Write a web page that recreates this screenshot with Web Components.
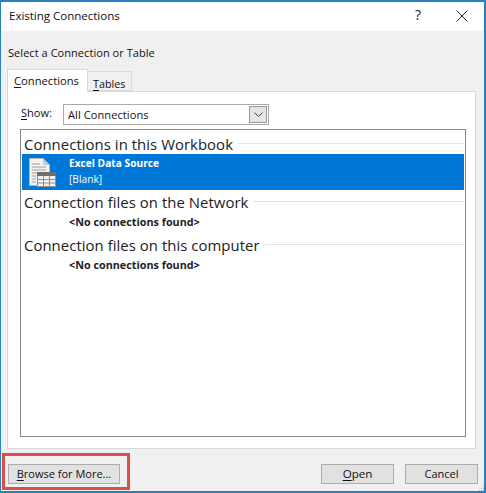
<!DOCTYPE html>
<html>
<head>
<meta charset="utf-8">
<title>Existing Connections</title>
<style>
  html, body { margin: 0; height: 100%; background: #fff; }
  body { font: 12px "Open Sans", "Noto Sans", sans-serif; color: #111; overflow: hidden; }
</style>
</head>
<body>

<x-dialog heading="Existing Connections">
  <div slot="lead">Select a Connection or Table</div>
  <x-tabs>
    <x-show-filter value="All Connections"></x-show-filter>
    <x-conn-list>
      <x-conn-group heading="Connections in this Workbook">
        <x-conn-item name="Excel Data Source" detail="[Blank]"></x-conn-item>
      </x-conn-group>
      <x-conn-group heading="Connection files on the Network" empty></x-conn-group>
      <x-conn-group heading="Connection files on this computer" empty></x-conn-group>
    </x-conn-list>
  </x-tabs>
  <x-button slot="left" key="B" rest="rowse for More..." wide></x-button>
  <x-button slot="right" key="O" rest="pen"></x-button>
  <x-button slot="right" rest="Cancel"></x-button>
  <x-highlight slot="overlay"></x-highlight>
</x-dialog>

<script>
// window frame, title bar and the button row
var template_dialog = document.createElement("template");
template_dialog.innerHTML = `
<style>
  :host { display: flex; flex-direction: column; box-sizing: border-box; width: 486px; height: 493px; position: relative;
    background: #f0f0f0; border-style: solid; border-color: #2a7fc0; border-width: 2px 2px 2px 1px; }
  #bar { display: flex; align-items: center; height: 29px; background: #fff; flex: none; }
  #title { font-size: 11.6px; margin: -2px 0 0 8px; flex: 1; letter-spacing: -0.05px; }
  #help { font-size: 14px; width: 14px; text-align: center; margin-right: 30px; margin-top: -4px; color: #222; }
  #close { width: 14px; height: 14px; margin-right: 15px; margin-top: -2px; display: block; }
  #lead { padding: 14px 0 0 7px; height: 25px; flex: none; font-size: 11px; letter-spacing: 0.05px; line-height: 16px; }
  #buttons { display: flex; justify-content: space-between; padding: 15px 6px 0 7px; flex: none; }
  #right { display: flex; gap: 11px; }
  #grip { position: absolute; right: 0; bottom: 0; display: block; }
</style>
<div id="bar">
  <div id="title"></div>
  <div id="help">?</div>
  <svg id="close" viewBox="0 0 14 14"><path d="M1.5 1.5 L12.5 12.5 M12.5 1.5 L1.5 12.5" stroke="#222" stroke-width="1" fill="none"/></svg>
</div>
<div id="lead"><slot name="lead"></slot></div>
<slot></slot>
<div id="buttons">
  <slot name="left"></slot>
  <div id="right"><slot name="right"></slot></div>
</div>
<svg id="grip" width="5" height="5" viewBox="0 0 5 5" fill="#b5b5b5"><rect x="4" y="0" width="1" height="1"/><rect x="2" y="2" width="1" height="1"/><rect x="4" y="2" width="1" height="1"/><rect x="0" y="4" width="1" height="1"/><rect x="2" y="4" width="1" height="1"/><rect x="4" y="4" width="1" height="1"/></svg>
<slot name="overlay"></slot>
`;
class XDialog extends HTMLElement {
  constructor(){
    super();
    this.attachShadow({mode:"open"});
  }
  connectedCallback(){
    this.shadowRoot.appendChild(template_dialog.content.cloneNode(true));
    this.shadowRoot.querySelector("#title").innerText = this.getAttribute("heading");
  }
}
customElements.define("x-dialog", XDialog);

// tab strip with the white panel under it
var template_tabs = document.createElement("template");
template_tabs.innerHTML = `
<style>
  :host { display: flex; flex-direction: column; margin: 0 8px 0 6px; flex: none; }
  #strip { display: flex; align-items: flex-end; height: 22px; position: relative; z-index: 1; margin-bottom: -1px; }
  .tab { box-sizing: border-box; border: 1px solid #d9d9d9; }
  .on { width: 81px; height: 23px; background: #fff; border-bottom: 0; padding: 3px 0 0 6px; font-size: 11.2px; }
  .off { width: 44px; height: 20px; background: #f0f0f0; border-left: 0; padding: 3px 0 0 5px; font-size: 10.8px; line-height: 17px; margin-bottom: 1px; }
  u { text-underline-offset: 2px; }
  #panel { box-sizing: border-box; height: 358px; background: #fff; border: 1px solid #d9d9d9; padding: 12px 9px 12px 13px; display: flex; flex-direction: column; }
</style>
<div id="strip">
  <div class="tab on"><u>C</u>onnections</div>
  <div class="tab off"><u>T</u>ables</div>
</div>
<div id="panel"><slot></slot></div>
`;
class XTabs extends HTMLElement {
  constructor(){
    super();
    this.attachShadow({mode:"open"});
    this.shadowRoot.appendChild(template_tabs.content.cloneNode(true));
  }
}
customElements.define("x-tabs", XTabs);

// Show: label and the drop down
var template_filter = document.createElement("template");
template_filter.innerHTML = `
<style>
  :host { display: flex; align-items: center; height: 21px; flex: none; margin-bottom: 4px; }
  #label { width: 42px; font-size: 11px; margin-top: -5px; }
  u { text-underline-offset: 2px; }
  #box { box-sizing: border-box; width: 206px; height: 21px; border: 1px solid #aaa; background: #fff; display: flex; align-items: center; justify-content: space-between; padding: 1px; }
  #value { padding-left: 3px; font-size: 11px; letter-spacing: 0.1px; }
  #arrow { box-sizing: border-box; width: 18px; height: 17px; background: #e4e4e4; border: 1px solid #9a9a9a; display: flex; align-items: center; justify-content: center; }
</style>
<div id="label"><u>S</u>how:</div>
<div id="box">
  <div id="value"></div>
  <div id="arrow"><svg width="9" height="5" viewBox="0 0 9 5"><path d="M0.5 0.5 L4.5 4.5 L8.5 0.5" stroke="#444" fill="none"/></svg></div>
</div>
`;
class XShowFilter extends HTMLElement {
  constructor(){
    super();
    this.attachShadow({mode:"open"});
  }
  connectedCallback(){
    this.shadowRoot.appendChild(template_filter.content.cloneNode(true));
    this.shadowRoot.querySelector("#value").innerText = this.getAttribute("value");
  }
}
customElements.define("x-show-filter", XShowFilter);

// the big list box
var template_list = document.createElement("template");
template_list.innerHTML = `
<style>
  :host { display: block; box-sizing: border-box; height: 308px; flex: none; margin-left: -1px; border: 1px solid #828790; background: #fff; padding: 2px 1px 1px; }
</style>
<slot></slot>
`;
class XConnList extends HTMLElement {
  constructor(){
    super();
    this.attachShadow({mode:"open"});
    this.shadowRoot.appendChild(template_list.content.cloneNode(true));
  }
}
customElements.define("x-conn-list", XConnList);

// group heading with a thin rule after it, items below
var template_group = document.createElement("template");
template_group.innerHTML = `
<style>
  :host { display: block; }
  #head { display: flex; align-items: center; height: 22px; padding-left: 2px; gap: 5px; font-size: 14.9px; color: #222; white-space: nowrap; }
  #text { margin-top: 2px; letter-spacing: 0.05px; }
  #rule { flex: 1; height: 1px; background: #e3e3e3; }
  #none { display: none; height: 21px; line-height: 19px; padding-left: 47px; font-size: 10.8px; font-weight: 700; color: #222; }
  :host([empty]) #none { display: block; }
</style>
<div id="head"><span id="text"></span><div id="rule"></div></div>
<slot></slot>
<div id="none">&lt;No connections found&gt;</div>
`;
class XConnGroup extends HTMLElement {
  constructor(){
    super();
    this.attachShadow({mode:"open"});
  }
  connectedCallback(){
    this.shadowRoot.appendChild(template_group.content.cloneNode(true));
    this.shadowRoot.querySelector("#text").innerText = this.getAttribute("heading");
  }
}
customElements.define("x-conn-group", XConnGroup);

// selected connection row
var template_item = document.createElement("template");
template_item.innerHTML = `
<style>
  :host { display: flex; align-items: center; height: 36px; background: #0078d7; color: #fff; }
  svg { margin: 2px 0 0 7px; flex: none; display: block; }
  #text { margin: -2px 0 0 12px; font-size: 10.2px; line-height: 16px; }
  #name { font-weight: 700; }
</style>
<svg width="28" height="30" viewBox="0 0 28 30">
  <path d="M0.5 0.5 H14 L20.5 7 V27.5 H0.5 Z" fill="#f2f2f2" stroke="#b9b9b9"/>
  <path d="M14 0.5 V7 H20.5 Z" fill="#c9c9c9"/>
  <path d="M3 6 H11 M3 9 H17 M3 12 H17 M3 15 H17 M3 18 H7 M3 21 H7 M3 24 H7" stroke="#9c9c9c" fill="none"/>
  <rect x="8" y="14" width="19" height="15" fill="#f2f2f2"/>
  <rect x="8" y="14" width="19" height="4" fill="#6f6f6f"/>
  <path d="M8.5 18 V28.5 H26.5 V18 M8 21.5 H27 M8 25 H27 M14.5 18 V29 M20.5 18 V29" stroke="#8f8f8f" fill="none"/>
</svg>
<div id="text"><div id="name"></div><div id="detail"></div></div>
`;
class XConnItem extends HTMLElement {
  constructor(){
    super();
    this.attachShadow({mode:"open"});
  }
  connectedCallback(){
    this.shadowRoot.appendChild(template_item.content.cloneNode(true));
    this.shadowRoot.querySelector("#name").innerText = this.getAttribute("name");
    this.shadowRoot.querySelector("#detail").innerText = this.getAttribute("detail");
  }
}
customElements.define("x-conn-item", XConnItem);

// dialog button, key is the underlined letter
var template_button = document.createElement("template");
template_button.innerHTML = `
<style>
  :host { display: flex; align-items: center; justify-content: center; box-sizing: border-box; width: 73px; height: 20px; background: #e1e1e1; border: 1px solid #adadad; font-size: 11px; color: #111; }
  :host([wide]) { width: 112px; }
  :host([key]) { font-size: 11.6px; }
  :host([wide]) { font-size: 11px; }
  span { margin-top: -1px; }
  span span { margin-top: 0; }
  u { text-underline-offset: 2px; }
</style>
<span><u id="key"></u><span id="rest"></span></span>
`;
class XButton extends HTMLElement {
  constructor(){
    super();
    this.attachShadow({mode:"open"});
  }
  connectedCallback(){
    this.shadowRoot.appendChild(template_button.content.cloneNode(true));
    this.shadowRoot.querySelector("#key").innerText = this.getAttribute("key") || "";
    this.shadowRoot.querySelector("#rest").innerText = this.getAttribute("rest");
  }
}
customElements.define("x-button", XButton);

// red annotation box drawn over the dialog
var template_highlight = document.createElement("template");
template_highlight.innerHTML = `
<style>
  :host { position: absolute; left: 1px; top: 451px; width: 128px; height: 37px; box-sizing: border-box; border: 3px solid #d94f4a; pointer-events: none; }
</style>
`;
class XHighlight extends HTMLElement {
  constructor(){
    super();
    this.attachShadow({mode:"open"});
    this.shadowRoot.appendChild(template_highlight.content.cloneNode(true));
  }
}
customElements.define("x-highlight", XHighlight);
</script>
</body>
</html>
